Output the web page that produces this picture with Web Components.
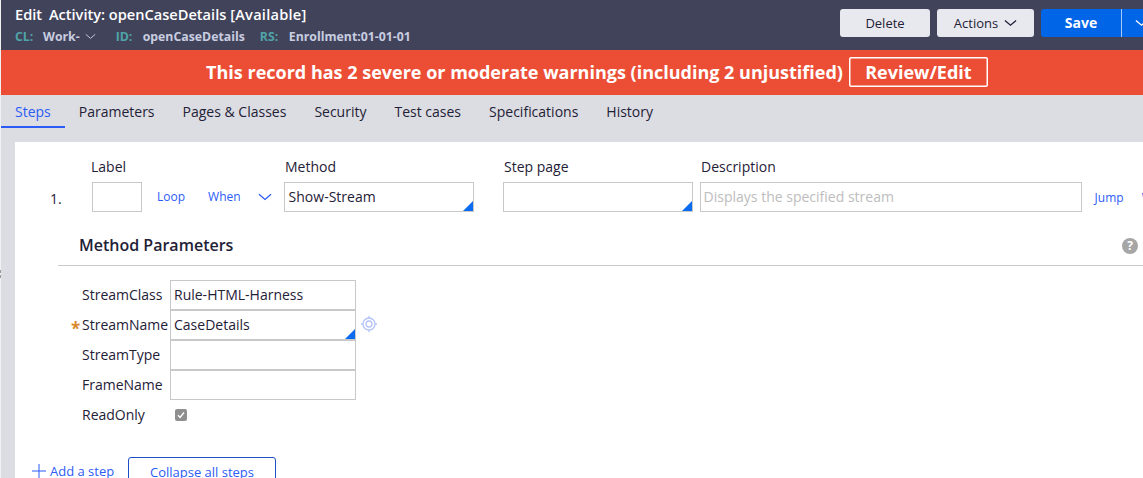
<!DOCTYPE html>
<html>
<head>
<meta charset="utf-8">
<style>
html, body { margin: 0; height: 478px; overflow: hidden; background: #f1f1f3; }
body { font-family: "Open Sans", sans-serif; color: #1f2137; }
</style>
</head>
<body>
<rule-header></rule-header>
<warning-bar></warning-bar>
<rule-tabs></rule-tabs>
<step-panel></step-panel>
<script>
'use strict';

const chevron = (w, h, color, sw) => `<svg width="${w}" height="${h}" viewBox="0 0 14 8" fill="none" stroke="${color}" stroke-width="${sw}" style="display:block"><path d="M1 1.2 7 6.4l6-5.2"/></svg>`;

class RuleHeader extends HTMLElement {
    constructor() {
        super();
        this.attachShadow({ mode: "open" });
        this.shadowRoot.innerHTML = `
        <style>
        :host { display: flex; justify-content: space-between; height: 50px; background: #41435a; margin-left: 1px; box-sizing: border-box; padding: 9px 0 0 14px; }
        .title { font-size: 14.6px; font-weight: 600; line-height: 10px; color: #fff; height: 11px; white-space: nowrap; }
        .title .a { margin-left: 3px; }
        .title .s { letter-spacing: .25px; }
        .meta { display: flex; align-items: center; font-size: 12.3px; font-weight: 700; color: #c8cde0; margin-top: 10px; height: 13px; white-space: nowrap; }
        .meta b { color: #4fa3a8; font-weight: 700; }
        .buttons { display: flex; gap: 7px; margin-right: -13px; }
        button { font: 13px "Open Sans", sans-serif; height: 28px; border: 0; border-radius: 3px; background: #e8e9ef; color: #1f2137; padding: 0; display: flex; align-items: center; justify-content: center; }
        .save { background: #0065e6; color: #fff; font-weight: 700; font-size: 14px; width: 81px; border-radius: 3px 0 0 3px; border-right: 1px solid #a8c8f5; padding-bottom: 2px; }
        .more { background: #0065e6; width: 34px; border-radius: 0 3px 3px 0; justify-content: flex-start; padding-left: 13px; margin-left: -7px; }
        </style>
        <div>
            <div class="title">Edit <span class="a">Activity: openCaseDetails</span> <span class="s">[Available]</span></div>
            <div class="meta"><b style="width:28px">CL:</b>Work-<span style="margin:0 20px 0 5px">${chevron(11, 7, "#c8cde0", 1.2)}</span><b style="width:27px">ID:</b><span style="margin-right:15px">openCaseDetails</span><b style="width:29px">RS:</b>Enrollment:01-01-01</div>
        </div>
        <div class="buttons">
            <button style="width:90px">Delete</button>
            <button style="width:97px;gap:6px">Actions ${chevron(13, 8, "#1f2137", 1.4)}</button>
            <button class="save">Save</button>
            <button class="more">${chevron(13, 8, "#fff", 1.4)}</button>
        </div>`;
    }
}

class WarningBar extends HTMLElement {
    constructor() {
        super();
        this.attachShadow({ mode: "open" });
        this.shadowRoot.innerHTML = `
        <style>
        :host { display: flex; align-items: center; justify-content: center; gap: 6px; height: 45px; background: #ec4e35; margin-left: 1px; color: #fff; font-size: 18px; font-weight: 700; white-space: nowrap; padding: 0 0 2px 50px; box-sizing: border-box; }
        .review { box-shadow: inset 0 0 0 1.5px #fff; border-radius: 2px; width: 139px; height: 30px; box-sizing: border-box; display: flex; align-items: center; justify-content: center; }
        </style>
        <span>This record has 2 severe or moderate warnings (including 2 unjustified)</span>
        <span class="review">Review/Edit</span>`;
    }
}

class RuleTabs extends HTMLElement {
    constructor() {
        super();
        this.attachShadow({ mode: "open" });
        const tabs = ["Steps", "Parameters", "Pages &amp; Classes", "Security", "Test cases", "Specifications", "History"];
        this.shadowRoot.innerHTML = `
        <style>
        :host { display: flex; height: 33px; margin-left: 1px; font-size: 14px; color: #1f2137; background: #dcdde2; }
        span { padding: 0 14px; line-height: 33px; height: 33px; box-sizing: border-box; white-space: nowrap; }
        .on { color: #2b5cf6; border-bottom: 2px solid #2b5cf6; }
        </style>
        ${tabs.map((t, i) => `<span class="${i === 0 ? "on" : ""}">${t}</span>`).join("")}`;
    }
}

class TextField extends HTMLElement {
    constructor() {
        super();
        this.attachShadow({ mode: "open" });
    }
    connectedCallback() {
        const value = this.getAttribute("value") || "";
        const hint = this.getAttribute("placeholder") || "";
        this.shadowRoot.innerHTML = `
        <style>
        :host { display: block; flex: none; height: 30px; box-sizing: border-box; border: 1px solid #c8c8c8; background: #fff; position: relative; font-size: 14px; line-height: 28px; padding-left: 3px; white-space: nowrap; color: #1f2137; }
        .hint { color: #bdbdbd; }
        i { position: absolute; right: 0; bottom: 0; width: 0; height: 0; border-style: solid; border-width: 0 0 10px 10px; border-color: transparent transparent #0b6cf0 transparent; }
        </style>
        ${value}<span class="hint">${hint}</span>${this.hasAttribute("picker") ? "<i></i>" : ""}`;
    }
}

class StepPanel extends HTMLElement {
    constructor() {
        super();
        this.attachShadow({ mode: "open" });
        this.shadowRoot.innerHTML = `
        <style>
        :host { display: block; position: relative; margin-left: 1px; padding: 14px 0 0 14px; height: 350px; box-sizing: border-box; background: #dcdde2; font-size: 14px; color: #1f2137; }
        .grip { position: absolute; left: -1px; top: 142px; width: 1px; height: 8px; background: linear-gradient(#9a9a9a 0 3px, transparent 3px 5px, #9a9a9a 5px); }
        .sheet { background: #fff; height: 336px; overflow: hidden; }
        .labels { display: grid; grid-template-columns: 194px 219px 197px auto; padding: 15px 0 0 76px; line-height: 19px; box-sizing: border-box; height: 40px; }
        .row { display: flex; align-items: center; height: 30px; white-space: nowrap; }
        .row > span { flex: none; }
        .num { width: 77px; padding-left: 35px; box-sizing: border-box; margin-top: 2px; }
        .link { color: #2b5cf6; font-size: 12px; }
        h2 { margin: 23px 0 0 64px; font-size: 16px; font-weight: 600; line-height: 20px; }
        .rule { margin: 10px 0 0 43px; border-top: 1px solid #c8c8c8; position: relative; }
        .help { position: absolute; right: 5px; top: -28px; width: 16px; height: 16px; border-radius: 50%; background: #a6a6a6; color: #fff; font-size: 12px; font-weight: 700; line-height: 16px; text-align: center; }
        .params { display: grid; grid-template-columns: 88px 186px 26px; grid-auto-rows: 30px; margin: 14px 0 0 67px; align-items: center; position: relative; width: max-content; }
        .params > span { margin-top: -2px; }
        .req { position: relative; }
        .req::before { content: "*"; position: absolute; left: -11px; top: 2px; color: #d98a2b; font-size: 17px; font-weight: 700; }
        .params > .check { width: 12px; height: 12px; border-radius: 2px; background: #8f8f8f; margin: 0 0 0 5px; display: flex; align-items: center; justify-content: center; }
        .target { margin: -2px 0 0 5px; display: block; }
        .actions { display: flex; align-items: flex-start; margin: 28px 0 0 17px; white-space: nowrap; }
        .add { display: flex; align-items: center; gap: 4px; color: #2b5cf6; height: 30px; margin-top: -2px; width: 96px; font-size: 13px; }
        .collapse { width: 148px; height: 34px; box-sizing: border-box; border: 1px solid #1c4fc4; border-radius: 3px; text-align: center; color: #2b5cf6; line-height: 28px; font-size: 13px; margin-top: -1px; }
        </style>
        <span class="grip"></span>
        <div class="sheet">
        <div class="labels"><span>Label</span><span>Method</span><span>Step page</span><span>Description</span></div>
        <div class="row">
            <span class="num">1.</span>
            <text-field style="width:50px"></text-field>
            <span class="link" style="margin-left:15px;margin-top:-1px">Loop</span>
            <span class="link" style="margin-left:23px;margin-top:-1px">When</span>
            <span style="margin:0 12px 0 17px">${chevron(14, 8, "#2b5cf6", 1.3)}</span>
            <text-field style="width:190px;padding-left:4px" value="Show-Stream" picker></text-field>
            <text-field style="width:190px;margin-left:29px" picker></text-field>
            <text-field style="width:382px;margin-left:7px" placeholder="Displays the specified stream"></text-field>
            <span class="link" style="margin-left:13px;margin-top:1px">Jump</span>
            <span class="link" style="margin-left:18px">When</span>
        </div>
        <h2>Method Parameters</h2>
        <div class="rule"><span class="help">?</span></div>
        <div class="params">
            <span>StreamClass</span><text-field value="Rule-HTML-Harness"></text-field><span></span>
            <span class="req">StreamName</span><text-field value="CaseDetails" picker></text-field>
            <svg class="target" width="16" height="16" viewBox="0 0 16 16" fill="none" stroke="#b4c3fa" stroke-width="1.3"><circle cx="8" cy="8" r="6"/><circle cx="8" cy="8" r="3"/><path d="M8 0v2M8 14v2M0 8h2M14 8h2"/></svg>
            <span>StreamType</span><text-field></text-field><span></span>
            <span>FrameName</span><text-field></text-field><span></span>
            <span>ReadOnly</span><span class="check"><svg width="8" height="8" viewBox="0 0 8 8" fill="none" stroke="#fff" stroke-width="1.4"><path d="M1 4.3 3.1 6.5 7 1.5"/></svg></span><span></span>
        </div>
        <div class="actions">
            <span class="add"><svg width="14" height="14" viewBox="0 0 14 14" stroke="#2b5cf6" stroke-width="1"><path d="M7 0v14M0 7h14"/></svg>Add a step</span>
            <span class="collapse">Collapse all steps</span>
        </div>
        </div>`;
    }
}

customElements.define("rule-header", RuleHeader);
customElements.define("warning-bar", WarningBar);
customElements.define("rule-tabs", RuleTabs);
customElements.define("text-field", TextField);
customElements.define("step-panel", StepPanel);
</script>
</body>
</html>
